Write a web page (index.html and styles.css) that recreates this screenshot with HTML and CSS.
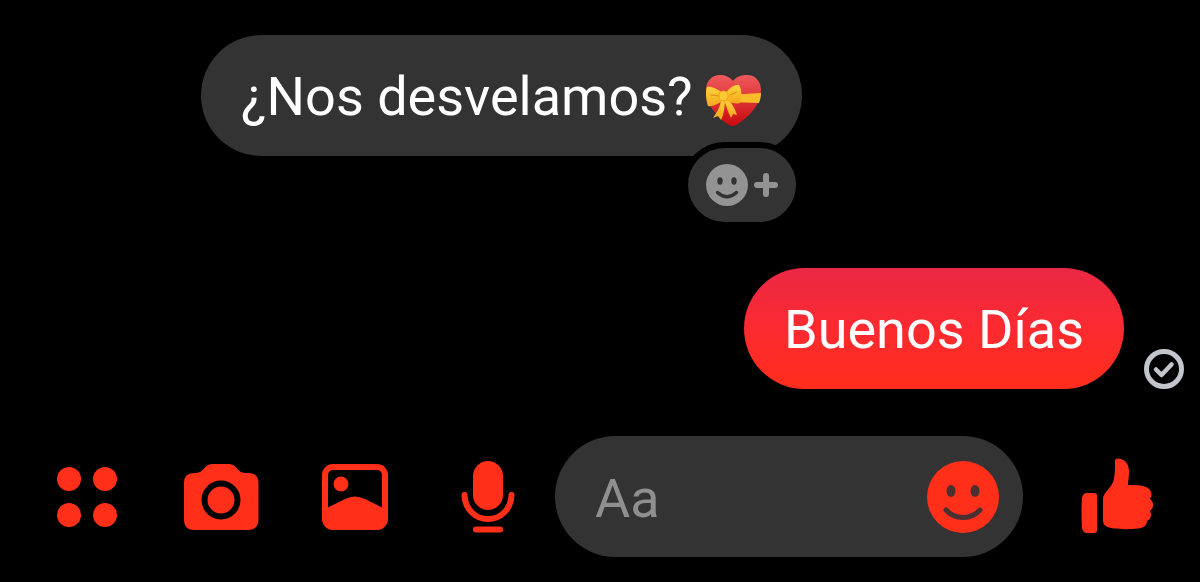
FILE: index.html
```html
<!DOCTYPE html>
<html lang="es">
<head>
    <meta charset="UTF-8">
    <meta name="viewport" content="width=device-width, initial-scale=1.0">
    <title>Chat</title>
    <link rel="stylesheet" href="styles.css">
</head>
<body>
    <main class="messages">
        <div class="message incoming">
            <div class="bubble">
                <span>¿Nos desvelamos?</span>
                <svg class="emoji" viewBox="0 0 56 52" role="img" aria-label="Corazón con lazo">
                    <defs>
                        <linearGradient id="heart" x1="0" y1="0" x2="0" y2="1">
                            <stop offset="0" stop-color="#ee5a5c"/>
                            <stop offset="0.4" stop-color="#e03a3e"/>
                            <stop offset="1" stop-color="#c80a10"/>
                        </linearGradient>
                        <linearGradient id="ribbon" x1="0" y1="0" x2="0" y2="1">
                            <stop offset="0" stop-color="#ffd23c"/>
                            <stop offset="1" stop-color="#f5a81c"/>
                        </linearGradient>
                    </defs>
                    <path fill="url(#heart)" d="M27 6C23 1 18 0 14 0C6 0 0 6 0 15C0 30 12 43 23 50C26 52 29 51 32 49C44 41 55 29 55 15C55 6 49 0 41 0C35 0 30 2 27 6Z"/>
                    <path fill="#f9bd2b" d="M22 20L55 18C55 22 54 25 53 28L22 27Z"/>
                    <path fill="url(#ribbon)" d="M15 23C15 31 11 37 7 43L12 41L15 45C18 39 19 31 19 24Z"/>
                    <path fill="url(#ribbon)" d="M18 24C20 31 22 37 25 43L27 39L31 40C29 33 25 28 22 23Z"/>
                    <path fill="url(#ribbon)" d="M16 18C12 14 5 11 1 12C-1 16 0 26 2 31C6 32 12 29 16 26Z"/>
                    <path fill="url(#ribbon)" d="M20 18C23 13 29 9 33 10C36 14 36 23 34 28C30 29 24 28 20 25Z"/>
                    <path fill="none" stroke="#e08a12" stroke-linecap="round" d="M5 20L13 21M24 20L31 17"/>
                    <rect x="13" y="16" width="9" height="10" rx="4" fill="#ffc934" stroke="#efa51c"/>
                </svg>
                <button class="reaction" type="button" aria-label="Reaccionar">
                    <svg class="reaction-icon" viewBox="0 0 74 44">
                        <circle cx="22" cy="22" r="21" fill="#939393"/>
                        <ellipse cx="15" cy="18" rx="2.7" ry="3.7" fill="#333"/>
                        <ellipse cx="29" cy="18" rx="2.7" ry="3.7" fill="#333"/>
                        <path d="M12.5 29.5Q22 38 31.5 29.5" fill="none" stroke="#333" stroke-width="3.4" stroke-linecap="round"/>
                        <path d="M61 13V31M52 22H70" stroke="#939393" stroke-width="6" stroke-linecap="round"/>
                    </svg>
                </button>
            </div>
        </div>

        <div class="message outgoing">
            <div class="bubble">Buenos Días</div>
            <svg class="status" viewBox="0 0 40 40" role="img" aria-label="Enviado">
                <circle cx="20" cy="20" r="17.5" fill="none" stroke="#c3c5cd" stroke-width="5"/>
                <path d="M12 20.5L17.5 26L27.500 15.5" fill="none" stroke="#c3c5cd" stroke-width="4.5" stroke-linecap="round" stroke-linejoin="round"/>
            </svg>
        </div>
    </main>

    <form class="composer">
        <div class="tools">
            <button type="button" aria-label="Más opciones">
                <svg class="icon" viewBox="0 0 80 80">
                    <circle cx="22" cy="22" r="12"/>
                    <circle cx="58" cy="22" r="12"/>
                    <circle cx="22" cy="58" r="12"/>
                    <circle cx="58" cy="58" r="12"/>
                </svg>
            </button>
            <button type="button" aria-label="Cámara">
                <svg class="icon" viewBox="0 0 80 80">
                    <path d="M13 16H15C23 16 23 7 31 7H48C56 7 56 16 64 16H67Q77.500 16 77.500 26V62Q77.500 73 67 73H13Q3 73 3 62V26Q3 16 13 16Z"/>
                    <circle cx="40" cy="43" r="16.5" fill="none" stroke="#000" stroke-width="6"/>
                </svg>
            </button>
            <button type="button" aria-label="Galería">
                <svg class="icon" viewBox="0 0 80 80">
                    <rect x="10" y="10" width="60" height="60" rx="8" fill="none" stroke="#ff2f1a" stroke-width="6"/>
                    <circle cx="26" cy="27" r="7.5"/>
                    <path d="M10 52L30 42Q40 37 50 42L70 52V63Q70 70 63 70H17Q10 70 10 63Z"/>
                </svg>
            </button>
            <button type="button" aria-label="Mensaje de voz">
                <svg class="icon" viewBox="0 0 80 80">
                    <rect x="24" y="4" width="30" height="49" rx="15"/>
                    <path d="M15.5 38C16 52 26 62 39 62C52 62 62 52 62.5 38M27 72.500H51" fill="none" stroke="#ff2f1a" stroke-width="6" stroke-linecap="round"/>
                </svg>
            </button>
        </div>
        <div class="field">
            <input type="text" placeholder="Aa" aria-label="Mensaje">
            <button type="button" aria-label="Emojis">
                <svg class="smile" viewBox="0 0 72 72">
                    <circle cx="36" cy="36" r="36"/>
                    <ellipse cx="24" cy="30" rx="4.5" ry="6" fill="#4a3030"/>
                    <ellipse cx="48" cy="30" rx="4.5" ry="6" fill="#4a3030"/>
                    <path d="M19 49C28 59 44 59 53 49" fill="none" stroke="#4a3030" stroke-width="5" stroke-linecap="round"/>
                </svg>
            </button>
        </div>
        <button type="button" aria-label="Me gusta">
            <svg class="icon" viewBox="0 0 80 80">
                <path d="M10 36H17Q20 36 20 39V73Q20 76 17 76H10Q6 76 5 71Q4 55 5 41Q6 36 10 36Z"/>
                <path d="M38 4C38 1 41 1 44 2C50 4 52 9 52 15C52 20 51 24 51 28C58 28 64 28 69 30C74 32 76 37 73 42C77 45 77 51 73 54C75 58 74 62 70 64C70 69 66 71 61 71.500C52 72.500 42 72.500 34 71C29 70 26 68 26 63V42C26 35 36 30 37 22C38 16 38 10 38 4Z"/>
            </svg>
        </button>
    </form>
</body>
</html>
```
FILE: styles.css
```css
:root {
    --bg: #000000;
    --bubble-bg: #333333;
    --accent: #ff2f1a;
    --text-color: #ffffff;
    --muted: #8f8f8f;
}

* {
    margin: 0;
    padding: 0;
    box-sizing: border-box;
}

body {
    background-color: var(--bg);
    color: var(--text-color);
    font-family: Roboto, sans-serif;
    font-size: 54px;
    line-height: 65px;
}

button {
    display: block;
    flex: none;
    background: none;
    border: none;
    cursor: pointer;
}

svg {
    display: block;
    flex: none;
}

.messages {
    display: flex;
    flex-direction: column;
    gap: 112px;
    padding: 35px 16px 47px 201px;
}

.message {
    display: flex;
    align-items: flex-end;
    gap: 20px;
}

.outgoing {
    justify-content: flex-end;
}

.bubble {
    position: relative;
    display: flex;
    align-items: center;
    gap: 13px;
    padding: 29px 40px 27px;
    border-radius: 61px;
    background-color: var(--bubble-bg);
}

.outgoing .bubble {
    background: linear-gradient(#ea2845, #fb2a30 50%, #ff2d1c);
}

.emoji {
    width: 56px;
    height: 52px;
    margin-top: 8px;
}

/* sits over the bottom right edge of the bubble */
.reaction {
    position: absolute;
    right: 0;
    bottom: -72px;
    padding: 15px 17px;
    border: 6px solid var(--bg);
    border-radius: 44px;
    background-color: var(--bubble-bg);
}

.reaction-icon {
    width: 74px;
    height: 44px;
}

.status {
    width: 40px;
    height: 40px;
}

.composer {
    display: flex;
    align-items: center;
    padding: 0 43px 24px 47px;
}

.tools {
    display: flex;
    gap: 54px;
    margin-right: 26px;
}

.icon {
    width: 80px;
    height: 80px;
    fill: var(--accent);
}

.field {
    display: flex;
    flex: 1;
    align-items: center;
    min-width: 0;
    margin-right: 54px;
    padding: 28px 24px 28px 40px;
    border-radius: 61px;
    background-color: var(--bubble-bg);
}

.field input {
    flex: 1;
    min-width: 0;
    height: 65px;
    padding-top: 4px;
    border: none;
    outline: none;
    background: none;
    color: var(--text-color);
    font: inherit;
}

.field input::placeholder {
    color: var(--muted);
    opacity: 1;
}

/* taller than the text line, so it must not stretch the field */
.field button {
    margin: -4px 0;
}

.smile {
    width: 72px;
    height: 72px;
    fill: var(--accent);
}
```
